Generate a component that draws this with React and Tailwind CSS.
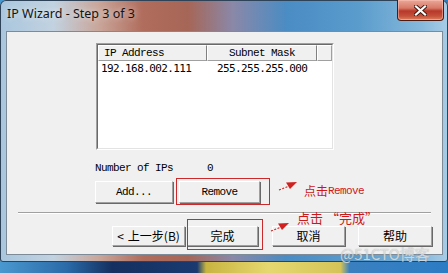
import React from "react";

function Btn({ className = "", children }) {
  return (
    <div
      className={
        "flex items-center justify-center border border-t-white border-l-white border-r-[#a0a0a0] border-b-[#a0a0a0] bg-[#f0f0f0] shadow-[1px_1px_0_#696969] text-black " +
        className
      }
    >
      {children}
    </div>
  );
}

function Arrow({ className = "" }) {
  return (
    <svg className={className} width="20" height="10" viewBox="0 0 20 10">
      <path d="M1 9 L10 5.5" stroke="#d02020" strokeWidth="1.2" strokeDasharray="2 1.5" fill="none" />
      <path d="M8 1.5 L19 1 L12 8 Z" fill="#d02020" />
    </svg>
  );
}

export default function App() {
  return (
    <div className="relative w-[448px] h-[273px] overflow-hidden bg-[linear-gradient(90deg,#4a98d0_0%,#2a6aa8_15%,#153060_25%,#1a3a70_44%,#c8b440_46%,#e6d870_60%,#d4c458_76%,#3a80c0_78%,#2c7cc4_100%)]">
      <div className="flex flex-col w-[448px] h-[262px] rounded-t-[6px] rounded-b-[3px] shadow-[inset_0_0_0_1px_#2e4358] bg-[linear-gradient(90deg,#a9c6de_0%,#c2d2e0_12%,#c9a69a_22%,#b06c5c_32%,#a66657_42%,#8a88a8_52%,#4a8cc4_64%,#5a9ccc_80%,#86b8dc_94%,#a8cce6_100%)]">
        {/* title bar */}
        <div className="flex items-start justify-between h-[31px] pl-[7px] pr-[4px]">
          <div className="pt-[6px] text-[12.5px] leading-[16px] text-[#141414] font-['Noto_Sans',sans-serif] [text-shadow:0_0_6px_rgba(255,255,255,0.8)]">
            IP Wizard - Step 3 of 3
          </div>
          <div className="flex items-center justify-center w-[47px] h-[21px] rounded-b-[4px] border border-t-0 border-[#4a1c14] bg-[linear-gradient(180deg,#eaa898_0%,#d87a68_40%,#b8382a_55%,#c4503a_80%,#e08060_100%)] shadow-[inset_0_0_0_1px_rgba(255,200,190,0.5)]">
            <svg width="13" height="11" viewBox="0 0 13 11">
              <path d="M2 1.5 L11 9.5 M11 1.5 L2 9.5" stroke="#3a1a14" strokeWidth="4" strokeLinecap="square" />
              <path d="M2 1.5 L11 9.5 M11 1.5 L2 9.5" stroke="#ffffff" strokeWidth="2.2" strokeLinecap="square" />
            </svg>
          </div>
        </div>

        {/* client area */}
        <div className="relative ml-[6px] mr-[5px] h-[224px] border border-[#7d8b99] bg-[#f0f0f0] flex flex-col">
          {/* list box */}
          <div className="ml-[89px] mt-[11px] w-[238px] h-[107px] border border-t-[#a0a0a0] border-l-[#a0a0a0] border-r-white border-b-white">
            <div className="w-full h-full border border-t-[#696969] border-l-[#696969] border-r-[#e3e3e3] border-b-[#e3e3e3] bg-white flex flex-col">
              <div className="flex h-[16px] text-[11px] leading-[14px] tracking-[-0.6px] font-['Liberation_Mono',monospace] text-black">
                <div className="w-[109px] flex items-center pl-[5px] bg-[#f0f0f0] border border-t-white border-l-white border-r-[#808080] border-b-[#a0a0a0]">
                  IP Address
                </div>
                <div className="w-[110px] flex items-center justify-center bg-[#f0f0f0] border border-t-white border-l-white border-r-[#808080] border-b-[#a0a0a0]">
                  Subnet Mask
                </div>
                <div className="flex-1 bg-[#f0f0f0] border border-t-white border-l-white border-r-[#a0a0a0] border-b-[#a0a0a0]"></div>
              </div>
              <div className="flex h-[13px] mt-[1px] text-[11px] leading-[13px] tracking-[-0.6px] font-['DejaVu_Sans_Mono',monospace] text-black">
                <div className="w-[109px] pl-[3px]">192.168.002.111</div>
                <div className="pl-[10px]">255.255.255.000</div>
              </div>
            </div>
          </div>

          {/* number of IPs */}
          <div className="flex ml-[88px] mt-[12px] h-[12px] items-center text-[11px] leading-[12px] tracking-[-0.6px] font-['Liberation_Mono',monospace] text-black">
            <div className="w-[112px]">Number of IPs</div>
            <div>0</div>
          </div>

          {/* add / remove */}
          <div className="flex ml-[88px] mt-[7px] gap-[6px] h-[22px] text-[11px] tracking-[-0.6px] font-['Liberation_Mono',monospace]">
            <Btn className="w-[78px]">Add...</Btn>
            <Btn className="w-[81px]">Remove</Btn>
          </div>

          {/* separator */}
          <div className="ml-[11px] mr-[11px] mt-[9px] h-[2px] border-t border-t-[#a0a0a0] border-b border-b-white"></div>

          {/* bottom buttons */}
          <div className="flex ml-[105px] mt-[12px] h-[20px] text-[12px] font-['Noto_Sans_CJK_SC',sans-serif]">
            <Btn className="w-[73px] gap-[4px]"><span>&lt;</span><span>上一步(B)</span></Btn>
            <Btn className="w-[71px] ml-[2px]">完成</Btn>
            <Btn className="w-[73px] ml-[14px]">取消</Btn>
            <Btn className="w-[74px] ml-[13px]">帮助</Btn>
          </div>

          {/* annotations */}
          <div className="absolute left-[169px] top-[146px] w-[94px] h-[27px] border border-[#cc2a2a]"></div>
          <Arrow className="absolute left-[271px] top-[149px]" />
          <div className="absolute left-[297px] top-[151px] flex items-center text-[#cc1818] h-[16px]">
            <span className="text-[12px] font-['Noto_Sans_CJK_SC',sans-serif]">点击</span>
            <span className="text-[11px] tracking-[-0.6px] font-['Liberation_Mono',monospace]">Remove</span>
          </div>

          <div className="absolute left-[180px] top-[187px] w-[76px] h-[31px] border border-[#cc2a2a]"></div>
          <Arrow className="absolute left-[263px] top-[190px]" />
          <div className="absolute left-[290px] top-[179px] text-[13px] leading-[14px] text-[#cc1818] font-['Noto_Sans_CJK_SC',sans-serif]">
            点击 “完成”
          </div>
        </div>
      </div>

      {/* watermark */}
      <div className="absolute left-[340px] top-[246px] text-[15px] leading-[16px] text-[rgba(235,235,235,0.75)] font-['Noto_Sans_CJK_SC',sans-serif] [text-shadow:0_0_1px_rgba(120,120,120,0.6)]">
        @51CTO博客
      </div>
    </div>
  );
}
